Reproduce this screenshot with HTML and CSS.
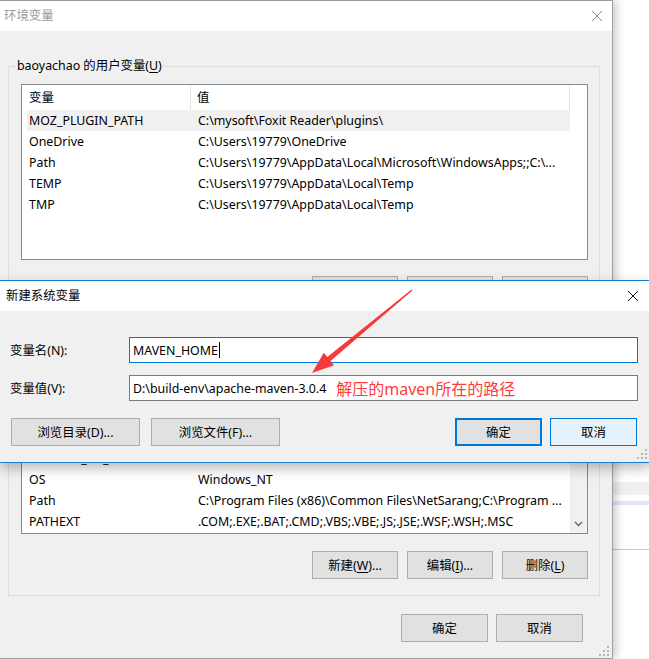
FILE: index.html
```html
<!DOCTYPE html>
<html>
<head>
<meta charset="utf-8">
<title>环境变量</title>
<link rel="stylesheet" href="styles.css">
</head>
<body>
<div class="desk">
  <div class="behind">
    <div class="bh-bar"></div>
    <div class="bh-sel"></div>
    <div class="bh-line"></div>
  </div>

  <div class="win">
    <div class="titlebar">
      <span class="title inactive">环境变量</span>
      <span class="close"><svg width="12" height="12" viewBox="0 0 12 12"><path d="M1 1L11 11M11 1L1 11" stroke="#8a8a8a" stroke-width="1"/></svg></span>
    </div>
    <div class="client">
      <fieldset class="group">
        <legend>baoyachao 的用户变量(<u>U</u>)</legend>
        <div class="list">
          <div class="lv">
            <div class="lv-head"><span class="c1">变量</span><span class="c2">值</span></div>
            <div class="lv-rows">
              <div class="row sel"><span class="c1">MOZ_PLUGIN_PATH</span><span class="c2">C:\mysoft\Foxit Reader\plugins\</span></div>
              <div class="row"><span class="c1">OneDrive</span><span class="c2">C:\Users\19779\OneDrive</span></div>
              <div class="row"><span class="c1">Path</span><span class="c2">C:\Users\19779\AppData\Local\Microsoft\WindowsApps;;C:\...</span></div>
              <div class="row"><span class="c1">TEMP</span><span class="c2">C:\Users\19779\AppData\Local\Temp</span></div>
              <div class="row"><span class="c1">TMP</span><span class="c2">C:\Users\19779\AppData\Local\Temp</span></div>
            </div>
          </div>
        </div>
        <div class="btns">
          <button class="btn">新建(<u>N</u>)...</button>
          <button class="btn">编辑(<u>E</u>)...</button>
          <button class="btn">删除(<u>D</u>)</button>
        </div>
      </fieldset>

      <fieldset class="group g2">
        <legend>系统变量(<u>S</u>)</legend>
        <div class="list list2">
          <div class="lv">
            <div class="lv-head"><span class="c1">变量</span><span class="c2">值</span></div>
            <div class="lv-rows bottom">
              <div class="row"><span class="c1">ComSpec</span><span class="c2">C:\WINDOWS\system32\cmd.exe</span></div>
              <div class="row"><span class="c1">DriverData</span><span class="c2">C:\Windows\System32\Drivers\DriverData</span></div>
              <div class="row"><span class="c1">JAVA_HOME</span><span class="c2">C:\Program Files\Java\jdk1.8.0_131</span></div>
              <div class="row"><span class="c1">NUMBER_OF_PROCESSORS</span><span class="c2">4</span></div>
              <div class="row"><span class="c1">OS</span><span class="c2">Windows_NT</span></div>
              <div class="row"><span class="c1">Path</span><span class="c2">C:\Program Files (x86)\Common Files\NetSarang;C:\Program ...</span></div>
              <div class="row"><span class="c1">PATHEXT</span><span class="c2">.COM;.EXE;.BAT;.CMD;.VBS;.VBE;.JS;.JSE;.WSF;.WSH;.MSC</span></div>
            </div>
          </div>
          <div class="vscroll">
            <svg class="chev" width="9" height="6" viewBox="0 0 9 6"><path d="M1 1L4.5 4.5L8 1" fill="none" stroke="#606060" stroke-width="1.3"/></svg>
          </div>
        </div>
        <div class="btns">
          <button class="btn">新建(<u>W</u>)...</button>
          <button class="btn">编辑(<u>I</u>)...</button>
          <button class="btn">删除(<u>L</u>)</button>
        </div>
      </fieldset>

      <div class="footer">
        <button class="btn wide">确定</button>
        <button class="btn wide">取消</button>
      </div>
    </div>
    <svg class="grip win-grip" width="10" height="10" viewBox="0 0 10 10"><g fill="#b4b4b4"><rect x="8" y="0" width="2" height="2"/><rect x="4" y="4" width="2" height="2"/><rect x="8" y="4" width="2" height="2"/><rect x="0" y="8" width="2" height="2"/><rect x="4" y="8" width="2" height="2"/><rect x="8" y="8" width="2" height="2"/></g></svg>
  </div>

  <div class="dialog">
    <div class="dlg-title">
      <span class="title">新建系统变量</span>
      <span class="close dclose"><svg width="12" height="12" viewBox="0 0 12 12"><path d="M1 1L11 11M11 1L1 11" stroke="#111" stroke-width="1"/></svg></span>
    </div>
    <div class="dlg-body">
      <div class="field">
        <label>变量名(<span>N</span>):</label>
        <div class="input focus"><span>MAVEN_HOME</span><span class="caret"></span></div>
      </div>
      <div class="field">
        <label>变量值(<span>V</span>):</label>
        <div class="input"><span>D:\build-env\apache-maven-3.0.4</span><span class="note">解压的maven所在的路径</span></div>
      </div>
      <div class="dlg-btns">
        <button class="btn browse">浏览目录(D)...</button>
        <button class="btn browse">浏览文件(F)...</button>
        <span class="spacer"></span>
        <button class="btn wide default">确定</button>
        <button class="btn wide hover">取消</button>
      </div>
    </div>
    <svg class="grip dlg-grip" width="10" height="10" viewBox="0 0 10 10"><g fill="#b4b4b4"><rect x="8" y="0" width="2" height="2"/><rect x="4" y="4" width="2" height="2"/><rect x="8" y="4" width="2" height="2"/><rect x="0" y="8" width="2" height="2"/><rect x="4" y="8" width="2" height="2"/><rect x="8" y="8" width="2" height="2"/></g></svg>
  </div>

  <svg class="arrow" width="649" height="659" viewBox="0 0 649 659">
    <polygon points="312,373 334,365.2 330.5,360.9 412.4,290.5 411.6,289.5 327.3,357.1 323.8,352.8" fill="#f43a3a"/>
  </svg>
</div>
</body>
</html>
```

FILE: styles.css
```css
html, body {
  margin: 0;
  padding: 0;
  width: 649px;
  height: 659px;
  overflow: hidden;
  background: #ffffff;
}

.desk {
  position: relative;
  width: 649px;
  height: 659px;
  overflow: hidden;
  font-family: "Noto Sans", "Noto Sans CJK SC", sans-serif;
  font-size: 12.4px;
  color: #000;
}

u { text-decoration: underline; text-underline-offset: 2px; }

/* window partly visible behind */
.behind {
  position: absolute;
  left: 613px;
  top: 0;
  width: 36px;
  height: 659px;
  background: #fff;
}
.bh-bar {
  position: absolute;
  left: 0; right: 0;
  top: 482px;
  height: 13px;
  background: #f0f0f0;
}
.bh-sel {
  position: absolute;
  left: 0; right: 0;
  top: 501px;
  height: 4px;
  background: #e4e4f6;
}
.bh-line {
  position: absolute;
  left: 0; right: 0;
  top: 549px;
  height: 1px;
  background: #c8c8c8;
}

/* main window */
.win {
  position: relative;
  box-sizing: border-box;
  width: 613px;
  height: 659px;
  border-top: 1px solid #9c9c9c;
  border-right: 1px solid #a0a0a0;
  border-bottom: 1px solid #a0a0a0;
  background: #f0f0f0;
  box-shadow: 3px 0 9px rgba(0, 0, 0, 0.22);
  display: flex;
  flex-direction: column;
}

.titlebar {
  height: 30px;
  background: #fff;
  display: flex;
  align-items: center;
  flex: none;
}
.title {
  padding-left: 4px;
  flex: 1;
  line-height: 16px;
}
.title.inactive { color: #9a9a9a; }
.close {
  width: 30px;
  height: 30px;
  display: flex;
  align-items: center;
  justify-content: center;
}

.client {
  flex: 1;
  display: flex;
  flex-direction: column;
}

.group {
  margin: 27px 12px 0 8px;
  padding: 10px 11px 15px 12px;
  border: 1px solid #dcdcdc;
  min-width: 0;
}
.group.g2 {
  margin-top: 12px;
  padding-bottom: 16px;
}
.group legend {
  margin-left: -5px;
  padding: 0 1px;
  line-height: 16px;
}

.list {
  box-sizing: border-box;
  height: 176px;
  border: 1px solid #828790;
  background: #fff;
  display: flex;
  overflow: hidden;
}
.lv {
  flex: 1;
  display: flex;
  flex-direction: column;
  min-width: 0;
  padding-right: 17px;
}
.list2 .lv { padding-right: 0; }

.lv-head {
  height: 25px;
  flex: none;
  display: grid;
  grid-template-columns: 164px 1fr;
  margin-left: 5px;
  line-height: 25px;
}
.lv-head .c1 { border-right: 1px solid #e5e5e5; padding-left: 2px; }
.lv-head .c2 { border-right: 1px solid #e5e5e5; padding-left: 6px; }

.lv-rows {
  flex: 1;
  display: flex;
  flex-direction: column;
  overflow: hidden;
}
.lv-rows.bottom {
  justify-content: flex-end;
  padding-bottom: 1px;
}
.row {
  flex: none;
  height: 21px;
  line-height: 21px;
  margin-left: 5px;
  display: grid;
  grid-template-columns: 164px 1fr;
  white-space: nowrap;
}
.row.sel { background: #f0f0f0; }
.row .c1 { padding-left: 2px; }
.row .c2 { padding-left: 7px; overflow: hidden; }

.vscroll {
  width: 17px;
  flex: none;
  background: #f0f0f0;
  display: flex;
  flex-direction: column;
  justify-content: flex-end;
  align-items: center;
  padding-bottom: 6px;
  box-sizing: border-box;
}

.btns {
  display: flex;
  justify-content: flex-end;
  gap: 9px;
  margin-top: 16px;
}
.g2 .btns { margin-top: 17px; }

.btn {
  box-sizing: border-box;
  width: 86px;
  height: 28px;
  padding: 0;
  margin: 0;
  font-family: "Noto Sans", "Noto Sans CJK SC", sans-serif;
  font-size: 12.4px;
  color: #000;
  background: #e1e1e1;
  border: 1px solid #adadad;
  border-radius: 0;
}
.btn.wide { width: 87px; }

.footer {
  display: flex;
  justify-content: flex-end;
  gap: 8px;
  margin-top: 18px;
  padding-right: 29px;
}

.grip { position: absolute; }
.win-grip { right: 3px; bottom: 2px; }

/* dialog */
.dialog {
  position: absolute;
  left: 0;
  top: 280px;
  width: 651px;
  border-top: 1px solid #1a7fd4;
  border-bottom: 1px solid #1a7fd4;
  background: #f0f0f0;
  box-shadow: 0 5px 12px rgba(0, 0, 0, 0.28);
}
.dlg-title {
  height: 30px;
  background: #fff;
  display: flex;
  align-items: center;
}
.dlg-title .title { padding-left: 6px; }
.dclose { width: 36px; }

.dlg-body {
  box-sizing: border-box;
  height: 151px;
  padding: 26px 13px 0 10px;
  display: flex;
  flex-direction: column;
}
.field {
  display: grid;
  grid-template-columns: 119px 1fr;
  align-items: center;
  height: 26px;
  margin-bottom: 12px;
}
.field:nth-child(2) { margin-bottom: 0; }

.input {
  box-sizing: border-box;
  height: 26px;
  border: 1px solid #7a7a7a;
  background: #fff;
  padding-left: 3px;
  display: flex;
  align-items: center;
  white-space: nowrap;
  overflow: hidden;
}
.input.focus { border-color: #0078d7; }
.caret {
  width: 1px;
  height: 16px;
  background: #000;
  margin-left: 1px;
}
.note {
  color: #ff3c3c;
  font-size: 16px;
  margin-left: 10px;
}

.dlg-btns {
  display: flex;
  align-items: center;
  margin-top: 17px;
  padding: 0 1px;
  gap: 11px;
}
.btn.browse { width: 129px; }
.spacer { flex: 1; }
.dlg-btns .btn.wide + .btn.wide { margin-left: -3px; }
.btn.default { border: 2px solid #0078d7; }
.btn.hover { background: #e5f1fb; border-color: #0078d7; }

.dlg-grip { right: 4px; bottom: 3px; }

.arrow {
  position: absolute;
  left: 0;
  top: 0;
  pointer-events: none;
}
```
